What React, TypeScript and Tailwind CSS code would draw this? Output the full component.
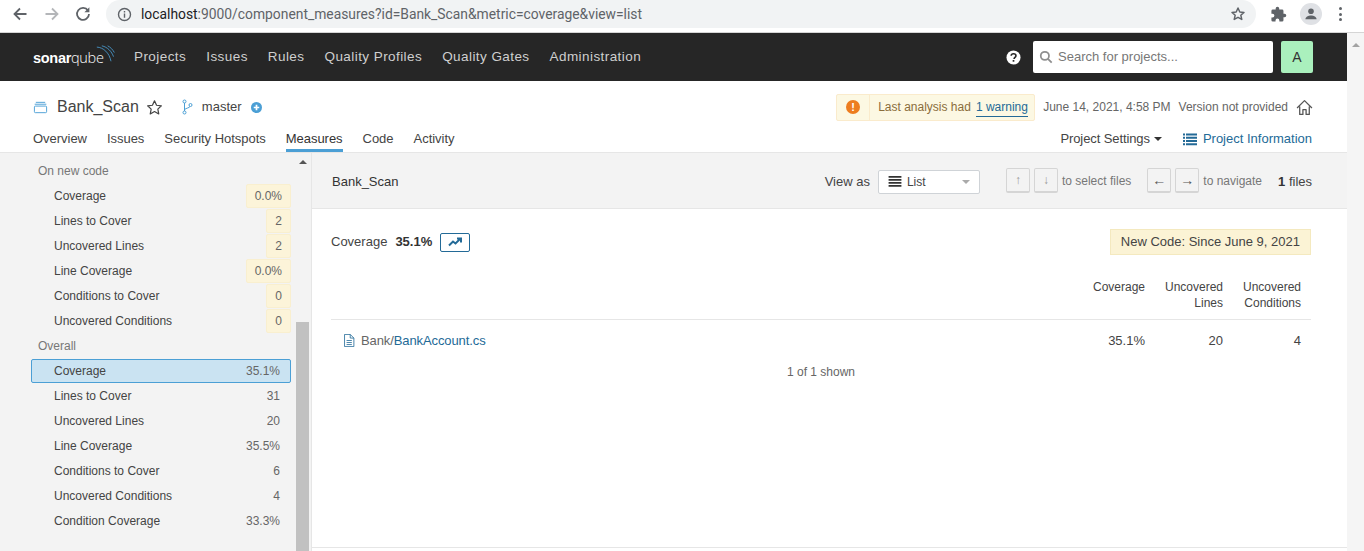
const font = { sans: 'font-["Liberation_Sans",Arial,sans-serif]' }

const navItems = ['Projects', 'Issues', 'Rules', 'Quality Profiles', 'Quality Gates', 'Administration']
const tabs = ['Overview', 'Issues', 'Security Hotspots', 'Measures', 'Code', 'Activity']

const newCode = [
  { label: 'Coverage', value: '0.0%' },
  { label: 'Lines to Cover', value: '2' },
  { label: 'Uncovered Lines', value: '2' },
  { label: 'Line Coverage', value: '0.0%' },
  { label: 'Conditions to Cover', value: '0' },
  { label: 'Uncovered Conditions', value: '0' },
]

const overall = [
  { label: 'Coverage', value: '35.1%', selected: true },
  { label: 'Lines to Cover', value: '31' },
  { label: 'Uncovered Lines', value: '20' },
  { label: 'Line Coverage', value: '35.5%' },
  { label: 'Conditions to Cover', value: '6' },
  { label: 'Uncovered Conditions', value: '4' },
  { label: 'Condition Coverage', value: '33.3%' },
]

function BrowserBar() {
  return (
    <div className="flex h-[33px] items-start border-b border-[#d5d5d5] bg-white font-['Roboto',sans-serif]">
      <div className="flex h-[28px] w-[106px] items-center pl-[12px]">
        <svg viewBox="0 0 16 16" className="h-4 w-4" fill="none" stroke="#5f6368" strokeWidth="1.8">
          <path d="M14.5 8H2.5M8 2.5 2.5 8 8 13.5" />
        </svg>
        <svg viewBox="0 0 16 16" className="ml-[16px] h-4 w-4" fill="none" stroke="#b4b6b9" strokeWidth="1.8">
          <path d="M1.5 8h12M8 2.5 13.5 8 8 13.5" />
        </svg>
        <svg viewBox="0 0 16 16" className="ml-[15px] h-4 w-4" fill="none" stroke="#5f6368" strokeWidth="1.8">
          <path d="M13 4.6A6 6 0 1 0 14 8" />
          <path d="M14.4 1.2v5h-5z" fill="#5f6368" stroke="none" />
        </svg>
      </div>
      <div className="flex h-[28px] w-[1150px] items-center rounded-[14px] bg-[#f1f3f4] pr-[10px] pl-[11px]">
        <svg viewBox="0 0 16 16" className="h-[15px] w-[15px]" fill="none" stroke="#5f6368" strokeWidth="1.5">
          <circle cx="8" cy="8" r="6.4" />
          <path d="M8 7v4.4M8 4.2v1.7" />
        </svg>
        <span className="ml-[9px] text-[13.85px] text-[#5f6368]">
          <span className="text-[#202124]">localhost</span>:9000/component_measures?id=Bank_Scan&amp;metric=coverage&amp;view=list
        </span>
        <svg viewBox="0 0 24 24" className="ml-auto h-[16px] w-[16px]" fill="none" stroke="#5f6368" strokeWidth="2.2" strokeLinejoin="round">
          <path d="m12 3 2.7 6 6.3.6-4.8 4.2 1.5 6.4L12 17l-5.7 3.2 1.5-6.4L3 9.6 9.3 9z" />
        </svg>
      </div>
      <div className="flex h-[28px] flex-1 items-center pl-[14px]">
        <svg viewBox="0 0 24 24" className="h-[17px] w-[17px]" fill="#5f6368">
          <path d="M20.5 11H19V7a2 2 0 0 0-2-2h-4V3.5a2.5 2.5 0 0 0-5 0V5H4a2 2 0 0 0-2 2v3.8h1.5a2.7 2.7 0 0 1 0 5.4H2V20a2 2 0 0 0 2 2h3.8v-1.5a2.7 2.7 0 0 1 5.4 0V22H17a2 2 0 0 0 2-2v-4h1.5a2.5 2.5 0 0 0 0-5z" />
        </svg>
        <div className="ml-[13px] flex h-[22px] w-[22px] items-center justify-center rounded-full bg-[#dfe1e5]">
          <svg viewBox="0 0 16 16" className="h-[14px] w-[14px]" fill="#5f6368">
            <circle cx="8" cy="4.8" r="3.2" />
            <path d="M1.6 14c0-3 3.4-4.4 6.400-4.400s6.400 1.400 6.400 4.400z" />
          </svg>
        </div>
        <div className="ml-[17px] flex flex-col gap-[2.5px]">
          <span className="h-[3px] w-[3px] rounded-full bg-[#5f6368]" />
          <span className="h-[3px] w-[3px] rounded-full bg-[#5f6368]" />
          <span className="h-[3px] w-[3px] rounded-full bg-[#5f6368]" />
        </div>
      </div>
    </div>
  )
}

function TopNav() {
  return (
    <div className="flex h-[48px] items-center bg-[#262626] pr-[34px] pl-[33px]">
      <div className="relative mr-[18px] flex h-[48px] w-[83px] items-center">
        <span className="mt-[3px] text-[14.5px] leading-none tracking-[-0.3px] text-white">
          <span className="font-bold">sonar</span>
          <span className="font-['Open_Sans',sans-serif] font-light">qube</span>
        </span>
        <svg viewBox="0 0 24 24" className="absolute top-[12px] left-[63px] h-[20px] w-[20px]" fill="none" stroke="#4b9fd5" strokeWidth="1">
          <path d="M1 2.5c8 .4 15 7 17 17" />
          <path d="M7 1c7 1.500 12 7 14 13" />
          <path d="M14 1c3.500 1.700 6 4.500 8 8" />
        </svg>
      </div>
      <nav className="flex gap-[20px] text-[13.5px] tracking-[0.43px] text-[#cfcfcf]">
        {navItems.map((item) => (
          <a key={item}>{item}</a>
        ))}
      </nav>
      <svg viewBox="0 0 16 16" className="ml-auto h-[15px] w-[15px]">
        <circle cx="8" cy="8" r="7.5" fill="#fff" />
        <path d="M5.500 6.200C5.600 4.700 6.700 4 8 4s2.600.700 2.600 2.100c0 1.900-2 1.700-2 3.500" fill="none" stroke="#262626" strokeWidth="1.700" />
        <rect x="7.100" y="10.700" width="1.800" height="1.800" fill="#262626" />
      </svg>
      <div className="ml-[12px] flex h-[32px] w-[240px] items-center rounded-[2px] bg-white pl-[6px]">
        <svg viewBox="0 0 16 16" className="h-[14px] w-[14px]" fill="none" stroke="#8e8e8e" strokeWidth="2">
          <circle cx="6.700" cy="6.700" r="4.700" />
          <path d="m10.200 10.200 4.300 4.300" />
        </svg>
        <span className="ml-[5px] text-[13px] text-[#777]">Search for projects...</span>
      </div>
      <div className="ml-[8px] flex h-[32px] w-[32px] items-center justify-center rounded-[2px] bg-[#aaf0bd] text-[14px] text-[#333]">A</div>
    </div>
  )
}

function ComponentHeader() {
  return (
    <div className="h-[72px] border-b border-[#e6e6e6] bg-white pr-[34px] pl-[33px]">
      <div className="flex h-[39px] items-center pt-[13px]">
        <svg viewBox="0 0 16 16" className="h-[15px] w-[15px]" fill="none" stroke="#4b9fd5" strokeWidth="1">
          <path d="M3 2.500h10M1.800 4.500h12.400" />
          <rect x="1.500" y="6.500" width="13" height="7" rx="1" />
        </svg>
        <span className="ml-[9px] text-[16px] text-[#444]">Bank_Scan</span>
        <svg viewBox="0 0 24 24" className="ml-[7px] h-[17px] w-[17px]" fill="none" stroke="#444" strokeWidth="1.700" strokeLinejoin="round">
          <path d="m12 2.500 2.900 6.300 6.800.8-5 4.700 1.300 6.800L12 17.700l-6 3.400 1.300-6.800-5-4.700 6.800-.8z" />
        </svg>
        <svg viewBox="0 0 16 16" className="ml-[17px] h-[16px] w-[16px]" fill="none" stroke="#4b9fd5" strokeWidth="1">
          <circle cx="4.500" cy="2.500" r="1.500" />
          <circle cx="4.500" cy="13.500" r="1.500" />
          <circle cx="10.500" cy="6" r="1.500" />
          <path d="M4.500 4v8M10 7.500c-1 1.500-3.500 1.500-5.500 3" />
        </svg>
        <span className="ml-[6px] text-[13px] text-[#444]">master</span>
        <svg viewBox="0 0 16 16" className="ml-[9px] h-[11px] w-[11px]">
          <circle cx="8" cy="8" r="8" fill="#4b9fd5" />
          <path d="M8 4v8M4 8h8" stroke="#fff" strokeWidth="2.500" />
        </svg>
        <div className="ml-auto flex h-[27px] w-[199px] items-stretch rounded-[2px] border border-[#faebcc] bg-[#fcf8e3] text-[12px] text-[#8a6d3b]">
          <div className="flex w-[33px] items-center justify-center border-r border-[#faebcc]">
            <span className="flex h-[14px] w-[14px] items-center justify-center rounded-full bg-[#ed7d20] text-[11px] leading-none font-bold text-white">!</span>
          </div>
          <div className="flex items-center pl-[8px]">
            Last analysis had
            <a className="ml-[5px] border-b border-[#236a97] text-[#236a97]">1 warning</a>
          </div>
        </div>
        <span className="ml-[8px] text-[12px] text-[#666]">June 14, 2021, 4:58 PM</span>
        <span className="ml-[8px] text-[12px] text-[#666]">Version not provided</span>
        <svg viewBox="0 0 16 16" className="ml-[8px] h-[17px] w-[17px]" fill="none" stroke="#555" strokeWidth="1.200" strokeLinejoin="round">
          <path d="M1 8.500 8 1.500l7 7M3.500 7v7.500h3V10h3v4.500h3V7" />
        </svg>
      </div>
      <div className="flex h-[32px] items-start pt-[9px] pr-px">
        <div className="flex gap-[20px] text-[13px] tracking-[-0.03px] text-[#444]">
          {tabs.map((tab) => (
            <a key={tab} className={tab === 'Measures' ? 'h-[23px] border-b-[3px] border-[#4b9fd5] text-[#333]' : 'h-[23px]'}>
              {tab}
            </a>
          ))}
        </div>
        <div className="ml-auto flex items-center text-[13px]">
          <span className="tracking-[-0.1px] text-[#444]">Project Settings</span>
          <span className="ml-[4px] h-0 w-0 border-x-[4px] border-t-[4px] border-x-transparent border-t-[#333]" />
          <svg viewBox="0 0 14 14" className="ml-[21px] h-[14px] w-[14px]" fill="#236a97">
            <path d="M0 1.500h2v2H0zM3 1.500h11v2H3zM0 4.800h2v2H0zM3 4.800h11v2H3zM0 8h2v2H0zM3 8h11v2H3zM0 11.200h2v2H0zM3 11.200h11v2H3z" />
          </svg>
          <span className="ml-[6px] text-[#236a97]">Project Information</span>
        </div>
      </div>
    </div>
  )
}

function Row({ label, value, leak, selected }: { label: string; value: string; leak?: boolean; selected?: boolean }) {
  if (selected) {
    return (
      <div className="my-[0.5px] flex h-[24px] items-center justify-between rounded-[2px] border border-[#4b9fd5] bg-[#cae3f2] pr-[10px] pl-[22px]">
        <span className="text-[12px] text-[#444]">{label}</span>
        <span className="text-[12px] text-[#666]">{value}</span>
      </div>
    )
  }
  return (
    <div className="flex h-[25px] items-center justify-between pl-[23px]">
      <span className="text-[12px] text-[#444]">{label}</span>
      {leak ? (
        <span className="flex h-[24px] items-center rounded-[2px] border border-[#f9efcf] bg-[#fcf4d9] px-[8px] text-[12px] text-[#666]">{value}</span>
      ) : (
        <span className="pr-[11px] text-[12px] text-[#666]">{value}</span>
      )}
    </div>
  )
}

function Sidebar() {
  return (
    <aside className="flex w-[312px] shrink-0 border-r border-[#e6e6e6] bg-[#f3f3f3]">
      <div className="w-[296px] pt-[6px] pr-[5px] pl-[31px]">
        <div className="flex h-[24px] items-center pl-[7px] text-[12px] text-[#777]">On new code</div>
        {newCode.map((m) => (
          <Row key={m.label} label={m.label} value={m.value} leak />
        ))}
        <div className="flex h-[25px] items-center pl-[7px] text-[12px] text-[#777]">Overall</div>
        {overall.map((m) => (
          <Row key={m.label} label={m.label} value={m.value} selected={m.selected} />
        ))}
      </div>
      <div className="relative w-[13px]">
        <span className="absolute top-[7px] left-[2.500px] h-0 w-0 border-x-[4px] border-b-[4px] border-x-transparent border-b-[#555]" />
        <div className="absolute top-[169px] bottom-0 w-[13px] bg-[#c1c1c1]" />
      </div>
    </aside>
  )
}

function KeyButton({ children, muted }: { children: string; muted?: boolean }) {
  return (
    <span
      className={`flex h-[25px] w-[24px] items-center justify-center rounded-[2px] border border-b-2 border-[#d5d5d5] bg-[#f3f3f3] ${
        muted ? 'text-[12px] text-[#999]' : 'text-[14px] text-[#555]'
      }`}
    >
      {children}
    </span>
  )
}

function MainPanel() {
  return (
    <main className="flex flex-1 flex-col">
      <div className="flex h-[56px] items-center border-b border-[#e6e6e6] bg-[#f3f3f3] pt-[2px] pr-[35px] pl-[20px] text-[12px]">
        <span className="text-[13px] text-[#333]">Bank_Scan</span>
        <span className="ml-auto text-[13px] text-[#444]">View as</span>
        <div className="ml-[8px] flex h-[24px] w-[102px] items-center rounded-[2px] border border-[#cfd3d7] bg-white px-[9px]">
          <svg viewBox="0 0 14 12" className="h-[11px] w-[14px]" fill="#333">
            <path d="M0 0h14v2H0zM0 3.200h14v2H0zM0 6.500h14v2H0zM0 9.700h14v2H0z" />
          </svg>
          <span className="ml-[5px] text-[#444]">List</span>
          <span className="ml-auto h-0 w-0 border-x-[4px] border-t-[4px] border-x-transparent border-t-[#aaa]" />
        </div>
        <div className="ml-[26px] flex -translate-y-px items-center gap-[4px]">
          <KeyButton muted>↑</KeyButton>
          <KeyButton muted>↓</KeyButton>
        </div>
        <span className="ml-[4px] -translate-y-px text-[#777]">to select files</span>
        <div className="ml-[16px] flex -translate-y-px items-center gap-[4px]">
          <KeyButton>←</KeyButton>
          <KeyButton>→</KeyButton>
        </div>
        <span className="ml-[4px] -translate-y-px text-[#777]">to navigate</span>
        <span className="ml-[16px] text-[13px] text-[#444]">
          <b className="text-[#333]">1</b> files
        </span>
      </div>
      <div className="flex h-[339px] flex-col border-b border-[#e6e6e6] bg-white pr-[36px] pl-[19px]">
        <div className="mt-[20px] flex h-[26px] items-center text-[13px]">
          <span className="text-[#444]">Coverage</span>
          <b className="ml-[8px] font-bold text-[#333]">35.1%</b>
          <span className="ml-[8px] flex h-[19px] w-[30px] items-center justify-center rounded-[2px] border border-[#236a97]">
            <svg viewBox="0 0 14 10" className="h-[10px] w-[14px]" fill="none" stroke="#236a97" strokeWidth="2">
              <path d="M1 8.500 5 4.500l2.500 2L12 2M9 1.500h4v4" />
            </svg>
          </span>
          <span className="ml-auto flex h-[26px] items-center border border-[#f4e9bf] bg-[#fbf3d5] px-[10px] text-[#444]">
            New Code: Since June 9, 2021
          </span>
        </div>
        <div className="mt-[24px] flex h-[41px] items-start justify-end border-b border-[#e6e6e6] pr-[10px] text-right text-[12px] leading-[16px] text-[#444]">
          <span>Coverage</span>
          <span className="ml-[20px] w-[58px]">
            Uncovered
            <br />
            Lines
          </span>
          <span className="ml-[20px] w-[58px]">
            Uncovered
            <br />
            Conditions
          </span>
        </div>
        <div className="flex h-[41px] items-center pr-[10px] pl-[12px] text-[13px]">
          <svg viewBox="0 0 14 16" className="h-[13px] w-[12px]" fill="none" stroke="#236a97" strokeWidth="1">
            <path d="M1.500.500h7l4.500 4.500v10.500h-11.500zM8.500.500V5H13M4 8h6.500M4 10.500h6.500M4 13h6.500" />
          </svg>
          <span className="ml-[6px] tracking-[-0.1px] text-[#666]">
            Bank/<span className="text-[#236a97]">BankAccount.cs</span>
          </span>
          <span className="ml-auto text-[#444]">35.1%</span>
          <span className="w-[78px] text-right text-[#444]">20</span>
          <span className="w-[78px] text-right text-[#444]">4</span>
        </div>
        <div className="pt-[2px] text-center text-[12px] text-[#666]">1 of 1 shown</div>
      </div>
      <div className="flex-1 bg-white" />
    </main>
  )
}

export default function App() {
  return (
    <div className={`flex h-[551px] w-[1364px] flex-col overflow-hidden bg-white ${font.sans}`}>
      <BrowserBar />
      <div className="flex min-h-0 flex-1">
        <div className="flex w-[1347px] flex-col">
          <TopNav />
          <ComponentHeader />
          <div className="flex min-h-0 flex-1">
            <Sidebar />
            <MainPanel />
          </div>
        </div>
        <div className="relative flex-1 bg-[#f5f5f5]">
          <span className="absolute top-[10px] left-[5px] h-0 w-0 border-x-[4px] border-b-[4px] border-x-transparent border-b-[#a3a3a3]" />
        </div>
      </div>
    </div>
  )
}
